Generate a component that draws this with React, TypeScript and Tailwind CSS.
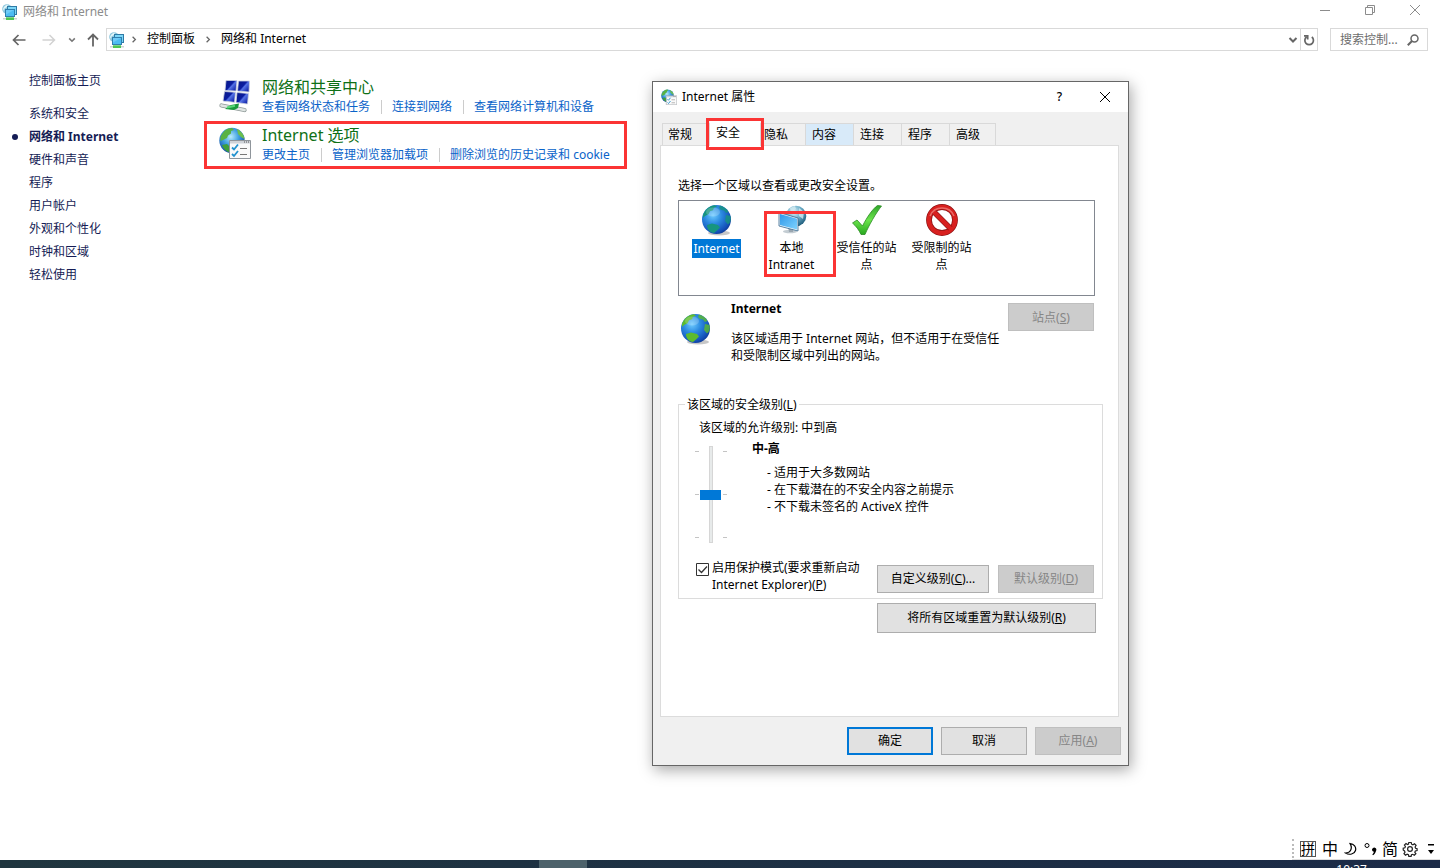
import type { ReactNode } from "react";

type IconProps = { className?: string };

function FolderNetIcon({ className }: IconProps) {
  return (
    <svg viewBox="0 0 16 16" className={className} aria-hidden="true">
      <circle cx="5" cy="5" r="4.800" fill="#8cc6dd" />
      <path d="M1 5C2 2 4 .8 6 .8L5 3 2.500 4.500 2 7z" fill="#e2f5f8" />
      <path d="M5 2h10v9H5z" fill="#2f7ba6" />
      <path d="M6 3h8v7H6z" fill="#7cd6f7" />
      <path d="M3 5h10v8H3z" fill="#2f7fae" />
      <path d="M4 6h8v6H4z" fill="#4cbcf2" />
      <path d="M4 6h8L4 10.500z" fill="#6ecbf7" />
      <path d="M1 14h14v1.500H1z" fill="#cfd6d2" />
      <path d="M4 13.300h8V16H4z" fill="#4cc653" />
    </svg>
  );
}

function NetworkCenterIcon({ className }: IconProps) {
  const screens = ["M7 1.500h11l-1 10.500-11-.5z", "M19.500 2h11l-.5 11-11.500-1z", "M5.500 12.500l11 .8-1 10-11.500-1.300z", "M18 13.500l11.500 1-1 10.500-11.500-1.500z"];
  return (
    <svg viewBox="0 0 32 34" className={className} aria-hidden="true">
      <defs>
        <linearGradient id="screen" x1="0" y1="0" x2="1" y2=".8">
          <stop offset="0" stopColor="#0a1a86" />
          <stop offset=".5" stopColor="#0a1ca0" />
          <stop offset=".6" stopColor="#5573e6" />
          <stop offset="1" stopColor="#0d1fa4" />
        </linearGradient>
      </defs>
      {screens.map((d) => (
        <path key={d} d={d} fill="url(#screen)" stroke="#ccd2e0" strokeWidth=".8" />
      ))}
      <path d="M2.500 26.500l23 4.500" stroke="#8d9896" strokeWidth="4.200" strokeLinecap="round" />
      <path d="M2.500 26.500l23 4.500" stroke="#dfe5e3" strokeWidth="2.800" strokeLinecap="round" />
      <path d="M6 30l6-4 8-1.500-1 4.500-4 2z" fill="#189a3c" />
      <path d="M8 28.500l8-1.700" stroke="#58d877" strokeWidth="2" />
    </svg>
  );
}

function Globe({ className, land = "#5dbb2e", id }: IconProps & { land?: string; id: string }) {
  return (
    <svg viewBox="0 0 32 32" className={className} aria-hidden="true">
      <defs>
        <radialGradient id={id} cx=".38" cy=".35" r=".75">
          <stop offset="0" stopColor="#6ecbff" />
          <stop offset=".4" stopColor="#2b8ae0" />
          <stop offset=".8" stopColor="#1450b8" />
          <stop offset="1" stopColor="#0a2f86" />
        </radialGradient>
      </defs>
      <ellipse cx="18" cy="29" rx="11" ry="2.500" fill="#000" opacity=".22" />
      <circle cx="15.500" cy="15.500" r="14.500" fill={`url(#${id})`} />
      <path d="M2 11C4 5 9 1.500 14 1.200l2 1.500-3 1-1 2.500-3 1-1.500 3L4 12l-2 2z" fill={land} />
      <path d="M19 1.500c4 1 7 3.500 8.500 6.500L25 9l-2-2.500-3-.5-2-2z" fill={land} opacity=".8" />
      <path d="M6 21l5-1.500 6 1.500 2 2.500-3 3-3 2.500c-4-.5-7-3.500-7-8z" fill={land} />
      <path d="M25 11l4.500 1c.8 4 0 7-2.500 8.500L24 17z" fill={land} opacity=".8" />
      <ellipse cx="12" cy="8" rx="7" ry="4.500" fill="#fff" opacity=".2" />
    </svg>
  );
}

function InternetOptionsIcon({ className, id }: IconProps & { id: string }) {
  return (
    <svg viewBox="0 0 32 32" className={className} aria-hidden="true">
      <defs>
        <radialGradient id={id} cx=".45" cy=".35" r=".7">
          <stop offset="0" stopColor="#b8ecfc" />
          <stop offset=".45" stopColor="#3f9fe0" />
          <stop offset="1" stopColor="#0d3c94" />
        </radialGradient>
      </defs>
      <circle cx="13" cy="13.500" r="12.700" fill={`url(#${id})`} />
      <path d="M1.500 10C4 4 8 1 13 .9l2 2-3 1.100 0 2.500-3 2-1 2.500-4 2-2.500 1z" fill="#58b244" />
      <path d="M18 2c4 2 7 6 7.500 10L22 10l-3-3z" fill="#6cbf4c" />
      <path d="M3 18l5-1 3 3v5.500c-4-1-7-4-8-7.500z" fill="#3f9f3c" />
      <path d="M10.500 13.500h21v18h-21z" fill="#fafafa" stroke="#8f959b" />
      <path d="M11 14h20v2.500H11z" fill="#cfd3d8" />
      <path d="M25 15h1M27 15h1M29 15h1" stroke="#555" />
      <path d="M13 20.500l2 2 4-5M13 27l2 2 4-5" fill="none" stroke="#2292cf" strokeWidth="1.800" />
      <path d="M21 21.500h7M21 27.500h7" stroke="#777" />
    </svg>
  );
}

function IntranetIcon({ className }: IconProps) {
  return (
    <svg viewBox="0 0 32 32" className={className} aria-hidden="true">
      <defs>
        <radialGradient id="intraGlobe" cx=".4" cy=".3" r=".7">
          <stop offset="0" stopColor="#dff4fb" />
          <stop offset=".5" stopColor="#6fb0ca" />
          <stop offset="1" stopColor="#22607f" />
        </radialGradient>
        <linearGradient id="intraScreen" x1="0" y1="0" x2="1" y2="1">
          <stop offset="0" stopColor="#2f97e8" />
          <stop offset="1" stopColor="#7ed3ff" />
        </linearGradient>
      </defs>
      <circle cx="20" cy="12" r="10.300" fill="url(#intraGlobe)" />
      <path d="M14 4l5-2 1 3-5 4zM23 4l5 4-1 7-4-3z" fill="#d2eaf0" opacity=".8" />
      <ellipse cx="14" cy="27.500" rx="7" ry="1.800" fill="#c3ccd2" />
      <path d="M12 23l5 1v4h-4z" fill="#9aa7b1" />
      <path d="M3 8.500l19 5.500v13L3 22z" fill="#e9f3fa" stroke="#33668d" strokeWidth=".8" />
      <path d="M4 10l17 4.800v10.700L4 21z" fill="url(#intraScreen)" />
    </svg>
  );
}

function TrustedIcon({ className }: IconProps) {
  return (
    <svg viewBox="0 0 32 32" className={className} aria-hidden="true">
      <defs>
        <linearGradient id="tick" x1="0" y1="0" x2="0" y2="1">
          <stop offset="0" stopColor="#2fa52a" />
          <stop offset=".5" stopColor="#6be44c" />
          <stop offset="1" stopColor="#28a81f" />
        </linearGradient>
      </defs>
      <path
        d="M1.500 19l4.500-3 5.500 6C16 13 22 4.500 26.500 1.500l4 .5C25 9 18 21 14 30.500h-4C8 26 5 22 1.500 19z"
        fill="url(#tick)"
        stroke="#2a8a22"
        strokeWidth=".8"
      />
    </svg>
  );
}

function RestrictedIcon({ className }: IconProps) {
  return (
    <svg viewBox="0 0 32 32" className={className} aria-hidden="true">
      <circle cx="16" cy="16" r="13" fill="#fff" stroke="#8e1414" strokeWidth="5.800" />
      <circle cx="16" cy="16" r="13" fill="none" stroke="#d8201f" strokeWidth="4.400" />
      <path d="M7.500 7.500l17 17" stroke="#8e1414" strokeWidth="5.400" />
      <path d="M6.500 6.500l19 19" stroke="#d8201f" strokeWidth="4.200" />
      <path d="M4 12A13 13 0 0 1 28 12" fill="none" stroke="#f08a86" strokeWidth="1.500" opacity=".7" />
    </svg>
  );
}

function Highlight({ className }: { className: string }) {
  return <div aria-hidden="true" className={`pointer-events-none absolute z-10 border-3 border-[#fb3434] ${className}`} />;
}

function Chevron({ className }: IconProps) {
  return (
    <svg viewBox="0 0 10 10" className={className} fill="none" stroke="currentColor" strokeWidth="2" aria-hidden="true">
      <path d="M1.500 3l3.500 3.500L8.500 3" />
    </svg>
  );
}

function Crumb() {
  return (
    <svg viewBox="0 0 6 10" className="h-[7px] w-[6px] shrink-0" fill="none" stroke="#666" strokeWidth="1.800" aria-hidden="true">
      <path d="M1 1l4 4-4 4" />
    </svg>
  );
}

const captionButton = "flex h-5 w-[45px] items-center justify-center";

function TitleBar() {
  return (
    <header className="flex h-6 items-center text-[#8c8c8c]">
      <FolderNetIcon className="ml-0.5 h-4 w-4" />
      <span className="ml-[5px]">网络和 Internet</span>
      <div className="mr-[3px] ml-auto flex h-full items-start">
        <button aria-label="最小化" className={captionButton}>
          <svg viewBox="0 0 12 12" className="h-3 w-3" stroke="currentColor" fill="none"><path d="M1 6.500h10" /></svg>
        </button>
        <button aria-label="还原" className={captionButton}>
          <svg viewBox="0 0 12 12" className="h-3 w-3" stroke="currentColor" fill="none"><path d="M1.500 3.500h7v7h-7zM3.500 3V1.500h7v7H9" /></svg>
        </button>
        <button aria-label="关闭" className={captionButton}>
          <svg viewBox="0 0 12 12" className="h-3 w-3" stroke="currentColor" fill="none"><path d="M1 1l10 10M11 1L1 11" /></svg>
        </button>
      </div>
    </header>
  );
}

function AddressRow() {
  return (
    <nav className="mt-1 flex h-[23px] items-center pr-3">
      <button aria-label="后退" className="ml-3 text-[#666]">
        <svg viewBox="0 0 14 12" className="h-3 w-3.5" fill="none" stroke="currentColor" strokeWidth="1.700"><path d="M13.500 6H1.500M6.500 1l-5 5 5 5" /></svg>
      </button>
      <button aria-label="前进" className="ml-4 text-[#d2d2d2]">
        <svg viewBox="0 0 14 12" className="h-3 w-3.5" fill="none" stroke="currentColor" strokeWidth="1.500"><path d="M.5 6h12M7.500 1l5 5-5 5" /></svg>
      </button>
      <button aria-label="最近浏览的位置" className="ml-3 text-[#777]">
        <Chevron className="h-2 w-2" />
      </button>
      <button aria-label="向上" className="ml-[11px] text-[#666]">
        <svg viewBox="0 0 12 14" className="h-3.5 w-3" fill="none" stroke="currentColor" strokeWidth="1.800"><path d="M6 13.500V1.500M1 6.500l5-5 5 5" /></svg>
      </button>
      <div className="ml-[7px] flex h-full flex-1 items-center border border-[#d9d9d9] pl-0.5">
        <FolderNetIcon className="h-4 w-4 shrink-0" />
        <div className="flex flex-1 items-center gap-2.5 pb-px pl-[6px]">
          <Crumb />
          <button>控制面板</button>
          <Crumb />
          <button>网络和 Internet</button>
        </div>
        <button aria-label="以前的位置" className="px-0.5 text-[#666]">
          <Chevron className="h-2.5 w-2.5" />
        </button>
        <button aria-label="刷新" className="flex h-full w-[17px] items-center justify-center border-l border-[#d9d9d9] text-[#666]">
          <svg viewBox="0 0 12 12" className="h-3 w-3" fill="none" stroke="currentColor" strokeWidth="1.700"><path d="M8.800 3A4.300 4.300 0 1 1 3.500 3M1 1.800h3.700v3.700" /></svg>
        </button>
      </div>
      <div className="ml-3 flex h-full w-[98px] items-center border border-[#d9d9d9] pr-2 pl-[9px]">
        <input aria-label="搜索控制面板" placeholder="搜索控制..." className="w-full min-w-0 outline-none placeholder:text-[#6d6d6d]" />
        <svg viewBox="0 0 12 12" className="h-3 w-3 shrink-0" fill="none" stroke="#666" strokeWidth="1.500" aria-hidden="true"><circle cx="7.500" cy="4.500" r="3.500" /><path d="M5 7L.8 11.200" strokeWidth="2" /></svg>
      </div>
    </nav>
  );
}

const categories = ["系统和安全", "网络和 Internet", "硬件和声音", "程序", "用户帐户", "外观和个性化", "时钟和区域", "轻松使用"];

function Sidebar() {
  return (
    <aside className="w-[204px] shrink-0 pl-[29px] leading-[15px] text-[#151c55]">
      <a href="#home">控制面板主页</a>
      <ul className="mt-[18px] flex flex-col gap-2">
        {categories.map((name, i) => (
          <li key={name} className="relative">
            {i === 1 && <span className="absolute top-[5px] -left-[17px] h-[6px] w-[6px] rounded-full bg-[#151c55]" />}
            <a href={`#c${i}`} className={i === 1 ? "font-bold" : ""}>{name}</a>
          </li>
        ))}
      </ul>
    </aside>
  );
}

function Category({ icon, title, links, marked }: { icon: ReactNode; title: string; links: string[]; marked?: boolean }) {
  return (
    <section className="relative flex h-12 pt-[5px] pr-[17px] pl-[15px]">
      {marked && <Highlight className="inset-0" />}
      <div className="mt-px">{icon}</div>
      <div className="ml-[11px]">
        <h2 className="text-base leading-[18px] text-[#0e7016]"><a href="#title">{title}</a></h2>
        <ul className="flex leading-[22px] whitespace-nowrap text-[#0a63c9]">
          {links.map((l, i) => (
            <li key={l} className="flex items-center">
              {i > 0 && <span className="mr-2.5 ml-[11px] h-[14px] w-px bg-[#ccc]" />}
              <a href="#task">{l}</a>
            </li>
          ))}
        </ul>
      </div>
    </section>
  );
}

const pushButton = "border border-[#adadad] bg-[#e1e1e1] disabled:border-[#bfbfbf] disabled:bg-[#ccc] disabled:text-[#868686]";

const zones = [
  { name: "Internet", icon: <Globe id="zoneGlobe" land="#17957f" className="h-8 w-8" /> },
  { name: "本地 Intranet", icon: <IntranetIcon className="h-8 w-8" /> },
  { name: "受信任的站点", icon: <TrustedIcon className="h-8 w-8" /> },
  { name: "受限制的站点", icon: <RestrictedIcon className="h-8 w-8" /> },
];

function Tabs() {
  const names = ["常规", "安全", "隐私", "内容", "连接", "程序", "高级"];
  return (
    <div role="tablist" className="relative flex items-end pl-0.5">
      {names.map((n) => {
        const look =
          n === "安全"
            ? "-mb-px h-[26px] w-[50px] border-t pb-0.5 bg-white pl-[6px]"
            : n === "内容"
              ? "h-[22px] w-12 border-t border-r bg-[#d8eaf9] pl-[6px]"
              : n === "隐私"
                ? "h-[22px] w-[46px] border-t border-r border-l pl-[3px]"
                : "h-[22px] w-12 border-t border-r pl-[6px] first:border-l first:pl-[5px] last-of-type:w-[46px]";
        return (
          <button key={n} role="tab" aria-selected={n === "安全"} className={`border-[#d9d9d9] text-left ${look}`}>
            {n}
          </button>
        );
      })}
      <Highlight className="-top-[2px] left-[46px] h-8 w-[58px]" />
    </div>
  );
}

function TickColumn() {
  return (
    <div aria-hidden="true" className="flex h-[97px] flex-col justify-between py-[5px]">
      <span className="h-px w-1 bg-[#c4c4c4]" />
      <span className="h-px w-1 bg-[#c4c4c4]" />
      <span className="h-px w-1 bg-[#c4c4c4]" />
    </div>
  );
}

function LevelSlider() {
  return (
    <div className="flex w-8 items-start justify-between">
      <TickColumn />
      <input
        type="range"
        aria-label="该区域的安全级别"
        min={0}
        max={2}
        defaultValue={1}
        className="block h-[97px] w-[21px] appearance-none bg-transparent [direction:rtl] [writing-mode:vertical-lr] [&::-webkit-slider-runnable-track]:mx-auto [&::-webkit-slider-runnable-track]:w-1 [&::-webkit-slider-runnable-track]:border [&::-webkit-slider-runnable-track]:border-[#d6d6d6] [&::-webkit-slider-runnable-track]:bg-[#e7eaea] [&::-webkit-slider-thumb]:-ml-[10px] [&::-webkit-slider-thumb]:h-2.5 [&::-webkit-slider-thumb]:w-[21px] [&::-webkit-slider-thumb]:appearance-none [&::-webkit-slider-thumb]:bg-[#0078d7]"
      />
      <TickColumn />
    </div>
  );
}

function LevelGroup() {
  return (
    <fieldset className="-mr-2 mt-8 border border-[#dcdcdc] pr-2 pb-[5px] pl-4">
      <legend className="-ml-2.5 px-0.5 leading-[17px]">该区域的安全级别(<u>L</u>)</legend>
      <p className="mt-1.5 pl-1 leading-[17px]">该区域的允许级别: 中到高</p>
      <div className="mt-1 flex">
        <div className="mt-1.5"><LevelSlider /></div>
        <div className="ml-[25px] leading-[17px]">
          <p className="font-bold">中-高</p>
          <ul className="mt-[7px] pl-[15px]">
            <li>- 适用于大多数网站</li>
            <li>- 在下载潜在的不安全内容之前提示</li>
            <li>- 不下载未签名的 ActiveX 控件</li>
          </ul>
        </div>
      </div>
      <div className="mt-4 flex items-end">
        <label className="flex flex-1 gap-[3px] pl-px leading-[17px]">
          <input type="checkbox" defaultChecked className="peer sr-only" />
          <svg viewBox="0 0 13 13" className="mt-1 h-[13px] w-[13px] shrink-0" fill="none" stroke="#333" aria-hidden="true">
            <path d="M.5.5h12v12H.5z" fill="#fff" />
            <path d="M2.500 6.500l3 3 5.500-6" strokeWidth="1.300" />
          </svg>
          <span>启用保护模式(要求重新启动<br />Internet Explorer)(<u>P</u>)</span>
        </label>
        <button className={`h-7 w-28 ${pushButton}`}>自定义级别(<u>C</u>)...</button>
        <button disabled className={`ml-[9px] h-7 w-24 ${pushButton}`}>默认级别(<u>D</u>)</button>
      </div>
    </fieldset>
  );
}

function Dialog() {
  return (
    <div role="dialog" aria-label="Internet 属性" className="absolute top-[81px] left-[652px] w-[477px] border border-[#666] bg-[#f0f0f0] shadow-[2px_4px_14px_rgba(0,0,0,0.35)]">
      <div className="flex h-[30px] items-center bg-white pl-2">
        <InternetOptionsIcon id="optSmall" className="h-4 w-4" />
        <h1 className="ml-[5px] flex-1">Internet 属性</h1>
        <button aria-label="帮助" className="w-[45px] font-medium">?</button>
        <button aria-label="关闭" className="flex w-[46px] justify-center">
          <svg viewBox="0 0 12 12" className="h-3 w-3" stroke="#000" fill="none"><path d="M1 1l10 10M11 1L1 11" /></svg>
        </button>
      </div>
      <div className="px-[7px] pt-2">
        <Tabs />
        <div className="mr-[2px] h-[572px] border border-[#dcdcdc] bg-white pt-[31px] pr-[23px] pl-[17px]">
          <p className="leading-[17px]">选择一个区域以查看或更改安全设置。</p>
          <ul className="mt-[6px] flex h-24 border border-[#828790] pt-[3px]">
            {zones.map((z, i) => (
              <li key={z.name} className="relative w-[75px]">
                {i === 1 && <Highlight className="top-[7px] left-[10px] h-[66px] w-[72px]" />}
                <button className="flex w-full flex-col items-center px-1.5 leading-[17px]">
                  {z.icon}
                  <span className={i === 0 ? "mt-[3px] bg-[#0078d7] px-px py-px text-white" : i === 1 ? "mt-[3px] w-12" : "mt-[3px]"}>{z.name}</span>
                </button>
              </li>
            ))}
          </ul>
          <div className="mt-1 flex">
            <Globe id="bigGlobe" className="mt-[13px] ml-[2px] h-8 w-8 shrink-0" />
            <div className="ml-[19px] flex-1 leading-[17px]">
              <div className="flex h-[30px] justify-between">
                <h2 className="font-bold">Internet</h2>
                <button disabled className={`mt-[3px] mr-px h-7 w-[86px] ${pushButton}`}>站点(<u>S</u>)</button>
              </div>
              <p className="w-[276px]">该区域适用于 Internet 网站，但不适用于在受信任和受限制区域中列出的网站。</p>
            </div>
          </div>
          <LevelGroup />
          <div className="mt-1 -mr-px flex justify-end">
            <button className={`h-[30px] w-[219px] ${pushButton}`}>将所有区域重置为默认级别(<u>R</u>)</button>
          </div>
        </div>
      </div>
      <div className="flex justify-end gap-2 px-[7px] py-2.5">
        <button className="h-7 w-[86px] border-2 border-[#0078d7] bg-[#e1e1e1]">确定</button>
        <button className={`h-7 w-[86px] ${pushButton}`}>取消</button>
        <button disabled className={`h-7 w-[86px] ${pushButton}`}>应用(<u>A</u>)</button>
      </div>
    </div>
  );
}

function InputMethodBar() {
  return (
    <div className="absolute right-0 bottom-2 flex h-[22px] items-center border-b border-[#ddd] bg-white pr-[6px] text-base leading-5">
      <span className="mr-[6px] h-[19px] border-l-2 border-dotted border-[#bbb]" />
      <span className="flex h-4 w-4 items-center justify-center border border-[#555] text-sm leading-none">拼</span>
      <span className="ml-1.5">中</span>
      <svg viewBox="0 0 14 14" className="ml-1.5 h-3.5 w-3.5" fill="none" stroke="#000" strokeWidth="1.200" aria-hidden="true"><path d="M6 1.500c4 .5 6.500 3.500 5.500 7-1 3.500-6 5-10 2.500 2.500 0 4-.8 5-2.500 1.200-2 1-4.500-.5-7z" /></svg>
      <svg viewBox="0 0 14 14" className="ml-1.5 h-3.5 w-3.5" aria-hidden="true"><circle cx="3" cy="3.500" r="2" fill="none" stroke="#000" /><path d="M8 7.500a2.200 2.200 0 1 1 4 1.500c-.5 2-1.500 3.200-3 4.200l-.7-.7c1-1 1.500-1.800 1.500-2.700A2.200 2.200 0 0 1 8 7.500z" /></svg>
      <span className="ml-1">简</span>
      <svg viewBox="0 0 16 16" className="ml-1 h-4 w-4" fill="none" stroke="#222" strokeWidth="1.200" aria-hidden="true"><path d="M6.800 1.500h2.400l.4 1.700 1.300.6 1.600-1 1.600 1.600-1 1.600.5 1.300 1.500.4v1.800l-1.700.5-.6 1.300 1.100 1.500-1.600 1.500-1.600-1-1.200.5-.4 1.600H6.800l-.4-1.700-1.300-.5-1.600 1-1.500-1.500 1-1.600-.5-1.200L1.200 9V7.200l1.700-.4.5-1.300-1-1.500L4 2.500l1.500 1 1-.4z" /><circle cx="8" cy="8" r="2.400" /></svg>
      <svg viewBox="0 0 6 12" className="ml-2.5 h-3 w-1.5" aria-hidden="true"><path d="M0 1h6v1.500H0zM0 7h6L3 11z" /></svg>
    </div>
  );
}

export default function App() {
  return (
    <div className="relative flex min-h-screen flex-col overflow-hidden bg-white font-['Noto_Sans','Noto_Sans_CJK_SC',sans-serif] text-xs text-black">
      <TitleBar />
      <AddressRow />
      <main className="flex flex-1 pt-[22px]">
        <Sidebar />
        <div>
          <Category icon={<NetworkCenterIcon className="h-[34px] w-8" />} title="网络和共享中心" links={["查看网络状态和任务", "连接到网络", "查看网络计算机和设备"]} />
          <Category marked icon={<InternetOptionsIcon id="optLarge" className="h-8 w-8" />} title="Internet 选项" links={["更改主页", "管理浏览器加载项", "删除浏览的历史记录和 cookie"]} />
        </div>
      </main>
      <footer className="relative flex h-2 bg-linear-to-r from-[#20363f] to-[#1b2a47]">
        <div className="ml-[539px] h-full w-12 bg-[#4d626b]" />
        <time className="mr-[73px] ml-auto pt-[3px] leading-[14px] text-white">10:37</time>
      </footer>
      <Dialog />
      <InputMethodBar />
    </div>
  );
}
